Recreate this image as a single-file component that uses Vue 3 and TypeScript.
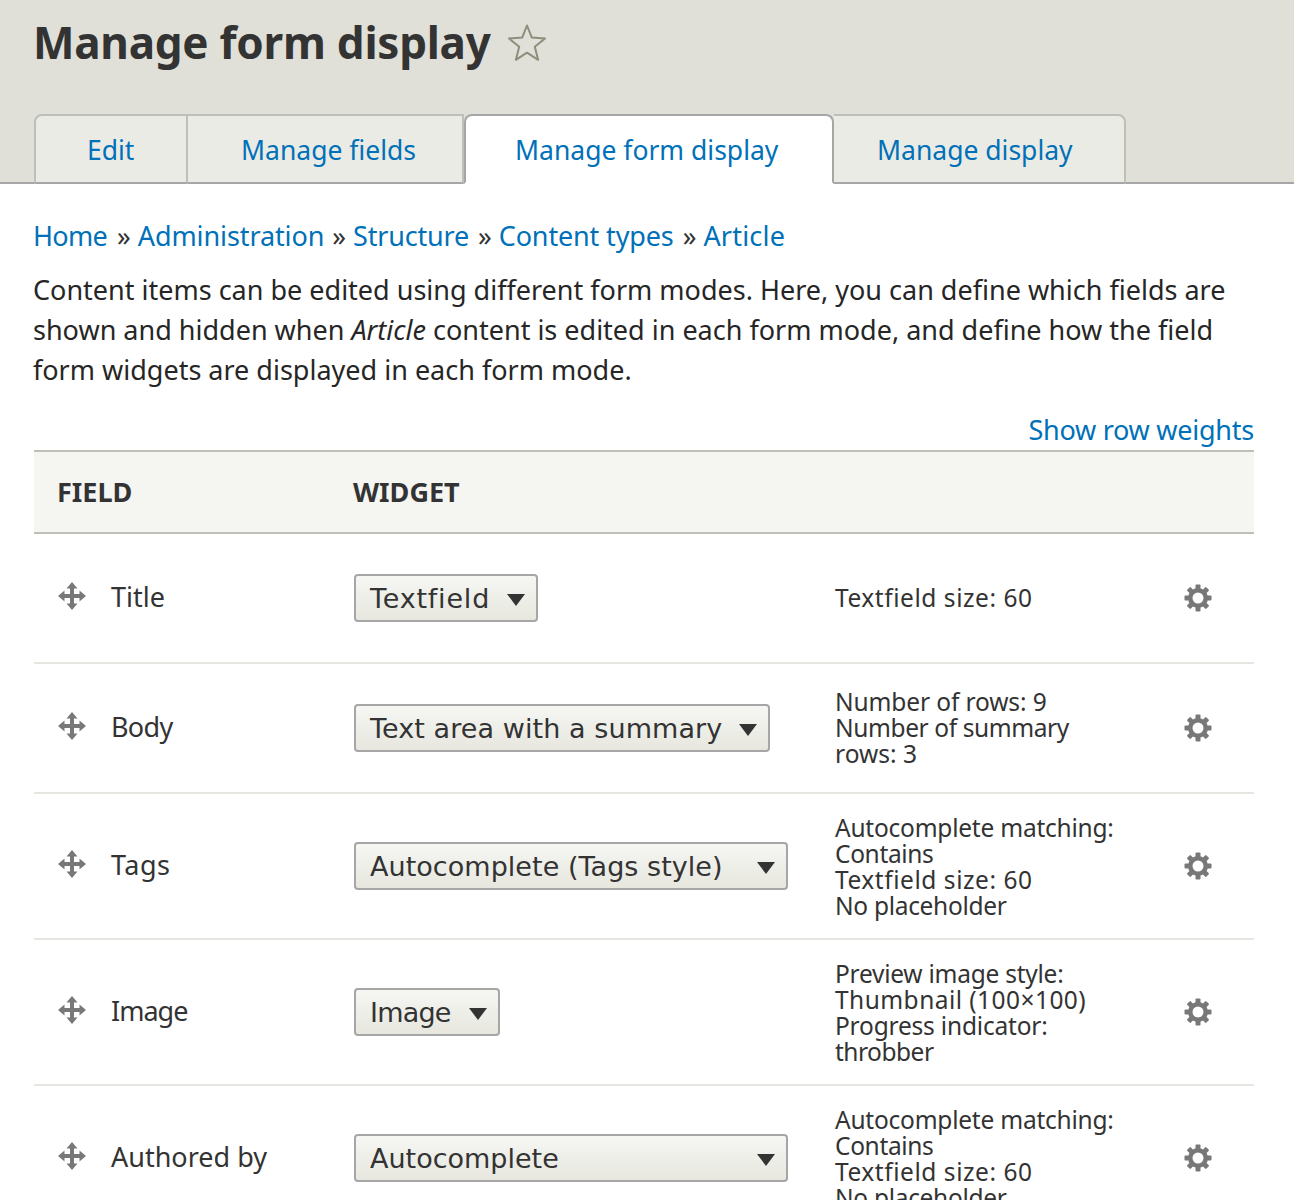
<script setup lang="ts">
interface Row { name: string; nameSpacing: number; widget: string; widgetSpacing: number; selectWidth: number; summary: string[]; height: number }
const tabs = [
  { label: 'Edit', active: false, width: 154, pad: 51 },
  { label: 'Manage fields', active: false, width: 276, pad: 53 },
  { label: 'Manage form display', active: true, width: 370, pad: 49 },
  { label: 'Manage display', active: false, width: 292, pad: 43 },
]
const crumbs = [
  { label: 'Home', spacing: -0.7, gap: 3 },
  { label: 'Administration', spacing: -0.1, gap: 1 },
  { label: 'Structure', spacing: -0.2, gap: 2 },
  { label: 'Content types', spacing: -0.15, gap: 2 },
  { label: 'Article', spacing: 0.2, gap: 0 },
]
const rows: Row[] = [
  { name: 'Title', nameSpacing: 0, widget: 'Textfield', widgetSpacing: 0.8, selectWidth: 184, summary: ['Textfield size: 60'], height: 128 },
  { name: 'Body', nameSpacing: -0.7, widget: 'Text area with a summary', widgetSpacing: 0.08, selectWidth: 416, summary: ['Number of rows: 9', 'Number of summary', 'rows: 3'], height: 128 },
  { name: 'Tags', nameSpacing: 0.5, widget: 'Autocomplete (Tags style)', widgetSpacing: 0.04, selectWidth: 434, summary: ['Autocomplete matching:', 'Contains', 'Textfield size: 60', 'No placeholder'], height: 144 },
  { name: 'Image', nameSpacing: -1, widget: 'Image', widgetSpacing: -0.8, selectWidth: 146, summary: ['Preview image style:', 'Thumbnail (100×100)', 'Progress indicator:', 'throbber'], height: 144 },
  { name: 'Authored by', nameSpacing: 0, widget: 'Autocomplete', widgetSpacing: 0, selectWidth: 434, summary: ['Autocomplete matching:', 'Contains', 'Textfield size: 60', 'No placeholder'], height: 144 },
]
const lineSpacing: Record<string, number> = {
  'Textfield size: 60': 0.55,
  'Number of rows: 9': -0.12,
  'Number of summary': -0.4,
  'rows: 3': 0,
  'Autocomplete matching:': -0.23,
  'Contains': -0.35,
  'No placeholder': -0.3,
  'Preview image style:': -0.25,
  'Thumbnail (100×100)': 0.45,
  'Progress indicator:': -0.2,
  'throbber': -0.5,
}
</script>

<template>
  <div class="page">
    <header class="head">
      <h1 class="title">
        Manage form display
        <svg class="star" width="40" height="40" viewBox="0 0 40 40" aria-hidden="true">
          <path d="M20 2.5 L24.8 14.6 L38 15.5 L27.8 23.8 L31.1 36.8 L20 29.7 L8.9 36.8 L12.2 23.8 L2 15.5 L15.2 14.6 Z" fill="none" stroke="#8e8e7c" stroke-width="2" stroke-linejoin="round" />
        </svg>
      </h1>
      <nav class="tabs">
        <a
          v-for="t in tabs"
          :key="t.label"
          class="tab"
          :class="{ active: t.active }"
          :style="{ width: t.width + 'px', paddingLeft: t.pad + 'px' }"
        >{{ t.label }}</a>
      </nav>
    </header>
    <main class="content">
      <div class="crumbs">
        <template v-for="(c, i) in crumbs" :key="c.label">
          <a class="link" :style="{ letterSpacing: c.spacing + 'px', marginRight: c.gap + 'px' }">{{ c.label }}</a><span v-if="i < crumbs.length - 1" class="sep"> » </span>
        </template>
      </div>
      <p class="intro">
        Content items can be edited using different form modes. Here, you can define which fields are<br />
        shown and hidden when <em>Article</em> content is edited in each form mode, and define how the field<br />
        form widgets are displayed in each form mode.
      </p>
      <div class="weights"><a class="link">Show row weights</a></div>
      <div class="table">
        <div class="row thead">
          <div class="c1">FIELD</div>
          <div class="c2">WIDGET</div>
        </div>
        <div
          v-for="r in rows"
          :key="r.name"
          class="row"
          :class="{ tall: r.summary.length === 4 }"
          :style="{ height: r.height + 'px' }"
        >
          <div class="c1 fname">
            <svg class="move" width="28" height="28" viewBox="0 0 28 28" aria-hidden="true">
              <path d="M14 0 L19.5 6.5 L16 6.5 L16 12 L21.5 12 L21.5 8.5 L28 14 L21.5 19.5 L21.5 16 L16 16 L16 21.5 L19.5 21.5 L14 28 L8.5 21.5 L12 21.5 L12 16 L6.5 16 L6.5 19.5 L0 14 L6.5 8.5 L6.5 12 L12 12 L12 6.5 L8.5 6.5 Z" fill="#787878" />
            </svg>
            <span :style="{ letterSpacing: r.nameSpacing + 'px' }">{{ r.name }}</span>
          </div>
          <div class="c2">
            <div class="select" :style="{ width: r.selectWidth + 'px' }">
              <span :style="{ letterSpacing: r.widgetSpacing + 'px' }">{{ r.widget }}</span>
              <i class="caret"></i>
            </div>
          </div>
          <div class="c3">
            <div v-for="s in r.summary" :key="s" :style="{ letterSpacing: lineSpacing[s] + 'px' }">{{ s }}</div>
          </div>
          <div class="c4">
            <svg width="30" height="30" viewBox="0 0 30 30" aria-hidden="true">
              <g fill="#787878">
                <circle cx="15" cy="15" r="10" />
                <rect x="12.5" y="1.5" width="5" height="27" rx="1" />
                <rect x="12.5" y="1.5" width="5" height="27" rx="1" transform="rotate(45 15 15)" />
                <rect x="12.5" y="1.5" width="5" height="27" rx="1" transform="rotate(90 15 15)" />
                <rect x="12.5" y="1.5" width="5" height="27" rx="1" transform="rotate(135 15 15)" />
              </g>
              <circle cx="15" cy="15" r="5.5" fill="#fff" />
            </svg>
          </div>
        </div>
      </div>
    </main>
  </div>
</template>

<style>
body { background: #fff; }
</style>

<style scoped>
.page {
  width: 1294px;
  height: 1200px;
  overflow: hidden;
  font-family: "Noto Sans", "DejaVu Sans", sans-serif;
  color: #333;
}
.head {
  height: 184px;
  box-sizing: border-box;
  background: #e0e0d8;
  border-bottom: 2px solid #a6a6a6;
  padding: 0 34px;
  display: flex;
  flex-direction: column;
  justify-content: space-between;
}
.title {
  margin: 0 0 0 -1px;
  padding-top: 14px;
  font-size: 44px;
  line-height: 56px;
  font-weight: 700;
  letter-spacing: -0.25px;
  display: flex;
  align-items: center;
  gap: 16px;
}
.star { flex: none; margin-top: 2px; }
.tabs { display: flex; height: 70px; margin-bottom: -2px; }
.tab {
  box-sizing: border-box;
  height: 70px;
  padding-top: 2px;
  display: flex;
  align-items: center;
  font-size: 26.5px;
  color: #0071b8;
  background: #ebebe6;
  border: 2px solid #bfbfba;
  border-bottom: 2px solid #a6a6a6;
  border-left-width: 0;
  white-space: nowrap;
}
.tab:first-child { border-left-width: 2px; border-top-left-radius: 8px; }
.tab:last-child { border-top-right-radius: 8px; }
.tab.active {
  background: #fff;
  border: 2px solid #a6a6a6;
  border-bottom-color: #fff;
  border-radius: 8px 8px 0 0;
}
.content { padding: 0 40px 0 33px; }
.link { color: #0071b8; }
.crumbs {
  margin-top: 32px;
  font-size: 27px;
  line-height: 40px;
}
.sep { color: #333; white-space: pre; }
.intro {
  margin: 14px 0 0;
  font-size: 27px;
  line-height: 40px;
  color: #262626;
}
.weights {
  margin-top: 20px;
  text-align: right;
  font-size: 27px;
  line-height: 40px;
  letter-spacing: -0.25px;
}
.table { margin-left: 1px; width: 1220px; }
.row {
  display: grid;
  grid-template-columns: 296px 481px 320px 123px;
  align-items: center;
  box-sizing: content-box;
  border-bottom: 2px solid #e6e6e1;
}
.thead {
  height: 80px;
  background: #f5f5f2;
  border-top: 2px solid #bfbfba;
  border-bottom: 2px solid #bfbfba;
  font-size: 27px;
  font-weight: 700;
  color: #333;
}
.thead .c1, .thead .c2 { padding-left: 23px; padding-bottom: 1px; }
.c1 { padding-left: 24px; }
.c2 { padding-left: 24px; }
.fname {
  display: flex;
  align-items: center;
  gap: 25px;
  padding-bottom: 4px;
  font-size: 27px;
  color: #333;
}
.move { flex: none; }
.select {
  box-sizing: border-box;
  height: 48px;
  border: 2px solid #a6a6a6;
  border-radius: 4px;
  background: linear-gradient(#f6f6f3, #e7e7df);
  padding: 0 11px 0 14px;
  display: flex;
  align-items: center;
  justify-content: space-between;
  font-family: "DejaVu Sans", sans-serif;
  font-size: 27px;
  color: #333;
  white-space: nowrap;
}
.caret {
  flex: none;
  width: 0;
  height: 0;
  margin-top: 3px;
  border-left: 9px solid transparent;
  border-right: 9px solid transparent;
  border-top: 12px solid #333;
}
.c3 {
  font-size: 24.5px;
  line-height: 26px;
  color: #333;
  padding-left: 24px;
  white-space: nowrap;
}
.tall .c3 { padding-top: 2px; }
.c4 { padding-left: 52px; display: flex; }
</style>
